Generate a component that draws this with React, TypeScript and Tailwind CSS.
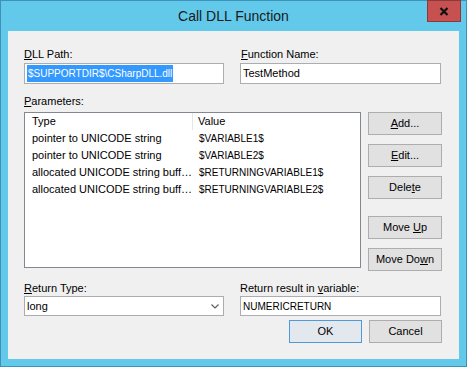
import React from "react";

const font = { fontFamily: '"Liberation Sans", Arial, sans-serif' };

function U({ children }: { children: React.ReactNode }) {
  return <span className="underline underline-offset-[1px]">{children}</span>;
}

function Btn({ children, def, w }: { children: React.ReactNode; def?: boolean; w?: string }) {
  return (
    <div
      className={
        "h-[23px] flex items-center justify-center text-[11px] text-black border " +
        (w === "73" ? "w-[73px] " : "w-[74px] ") +
        (def ? "border-[#4f9ad8] bg-[#e3e8ee]" : "border-[#adadad] bg-[#e1e1e1]")
      }
    >
      <span className="whitespace-pre">{children}</span>
    </div>
  );
}

const rows: [string, string][] = [
  ["pointer to UNICODE string", "$VARIABLE1$"],
  ["pointer to UNICODE string", "$VARIABLE2$"],
  ["allocated UNICODE string buff…", "$RETURNINGVARIABLE1$"],
  ["allocated UNICODE string buff…", "$RETURNINGVARIABLE2$"],
];

export default function App() {
  return (
    <div
      className="w-[467px] h-[367px] bg-[#62c9ea] border border-[#3c93b6] flex flex-col relative text-black"
      style={font}
    >
      <div className="h-[30px] flex items-center justify-center text-[14px] text-[#1a1a1a] pt-[1px]">
        Call DLL Function
      </div>
      <div className="absolute top-[-1px] right-[5px] w-[34px] h-[22px] bg-[#c75050] border border-[#8a3a3a] flex items-center justify-center">
        <svg width="10" height="9" viewBox="0 0 10 9">
          <path d="M1.5 1 L8.5 8 M8.5 1 L1.5 8" stroke="#111" strokeWidth="2.2" />
        </svg>
      </div>

      <div className="mx-[7px] h-[328px] bg-[#f0f0f0] flex flex-col pl-[16px] text-[11px]">
        {/* Row 1 */}
        <div className="flex gap-[16px] mt-[16px]">
          <div className="w-[200px] flex flex-col">
            <div className="h-[16px] leading-[14px]">
              <U>D</U>LL Path:
            </div>
            <div className="h-[21px] bg-white border border-[#abadb3] flex items-center pl-[2px]">
              <span className="bg-[#3399ff] text-white text-[10px] leading-[17px] px-[1px]">
                $SUPPORTDIR$\CSharpDLL.dll
              </span>
            </div>
          </div>
          <div className="w-[201px] flex flex-col">
            <div className="h-[16px] leading-[14px] pl-[1px]">
              <U>F</U>unction Name:
            </div>
            <div className="h-[21px] bg-white border border-[#abadb3] flex items-center pl-[2px]">
              TestMethod
            </div>
          </div>
        </div>

        {/* Parameters */}
        <div className="mt-[10px] h-[18px] leading-[14px]">
          <U>P</U>arameters:
        </div>
        <div className="flex gap-[7px] items-start">
          <div className="w-[337px] h-[156px] bg-white border border-[#828790] flex flex-col">
            <div className="h-[17px] flex items-center">
              <div className="w-[168px] h-full flex items-center pl-[7px] border-r border-[#e5e5e5]">Type</div>
              <div className="pl-[5px]">Value</div>
            </div>
            {rows.map(([t, v], i) => (
              <div key={i} className="h-[17px] flex items-center">
                <div className="w-[168px] pl-[7px] whitespace-nowrap">{t}</div>
                <div className="pl-[6px] text-[10px] whitespace-nowrap">{v}</div>
              </div>
            ))}
          </div>
          <div className="flex flex-col">
            <Btn>
              <U>A</U>dd...
            </Btn>
            <div className="mt-[9px]">
              <Btn>
                <U>E</U>dit...
              </Btn>
            </div>
            <div className="mt-[9px]">
              <Btn>
                Dele<U>t</U>e
              </Btn>
            </div>
            <div className="mt-[17px]">
              <Btn>
                {"Move "}<U>U</U>p
              </Btn>
            </div>
            <div className="mt-[9px]">
              <Btn>
                Move Do<U>w</U>n
              </Btn>
            </div>
          </div>
        </div>

        {/* Return row */}
        <div className="flex gap-[16px] mt-[10px]">
          <div className="w-[200px] flex flex-col">
            <div className="h-[15px] leading-[14px]">
              <U>R</U>eturn Type:
            </div>
            <div className="h-[20px] bg-white border border-[#acacac] flex items-center justify-between pl-[2px] pr-[4px]">
              <span>long</span>
              <svg width="8" height="5" viewBox="0 0 8 5">
                <path d="M0.5 0.5 L4 4 L7.5 0.5" stroke="#606060" strokeWidth="1.2" fill="none" />
              </svg>
            </div>
          </div>
          <div className="w-[201px] flex flex-col">
            <div className="h-[15px] leading-[14px]">
              Return result in <U>v</U>ariable:
            </div>
            <div className="h-[20px] bg-white border border-[#abadb3] flex items-center pl-[2px] text-[10px]">
              NUMERICRETURN
            </div>
          </div>
        </div>

        <div className="flex justify-end gap-[7px] mt-[4px] pr-[17px]">
          <Btn def w="73">OK</Btn>
          <Btn w="73">Cancel</Btn>
        </div>
      </div>
    </div>
  );
}
